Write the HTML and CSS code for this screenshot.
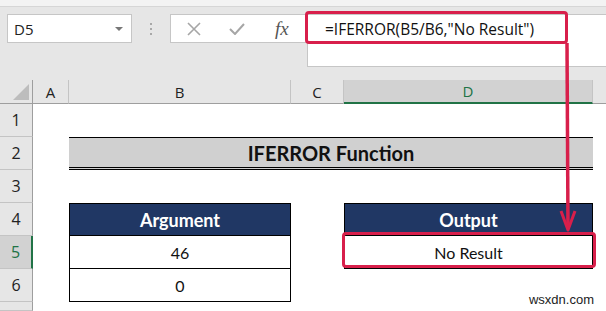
FILE: index.html
```html
<!DOCTYPE html>
<html lang="en">
<head>
    <meta charset="UTF-8">
    <meta name="viewport" content="width=device-width, initial-scale=1.0">
    <title>IFERROR Function</title>
    <link rel="stylesheet" href="styles.css">
</head>
<body>
    <div class="window">
        <div class="top-strip"></div>

        <div class="toolbar">
            <div class="name-box">
                <span>D5</span>
                <span class="drop"></span>
            </div>
            <div class="grip"><i></i><i></i><i></i></div>
            <div class="fx-box">
                <svg class="icon" width="14" height="14" viewBox="0 0 14 14">
                    <path d="M1 1 L13 13 M13 1 L1 13" stroke="#a6a6a6" stroke-width="1.6" fill="none"/>
                </svg>
                <svg class="icon" width="16" height="12" viewBox="0 0 16 12">
                    <path d="M1 6 L6 11 L15 1" stroke="#a6a6a6" stroke-width="2" fill="none"/>
                </svg>
                <span class="fx">fx</span>
            </div>
            <div class="formula">=IFERROR(B5/B6,"No Result")</div>
        </div>

        <div class="sheet">
            <div class="hd corner"><span class="tri"></span></div>
            <div class="hd">A</div>
            <div class="hd">B</div>
            <div class="hd">C</div>
            <div class="hd active-col">D</div>
            <div class="hd last"></div>

            <!-- row 1 -->
            <div class="rn">1</div>
            <div class="cell"></div><div class="cell"></div><div class="cell"></div><div class="cell"></div><div class="cell"></div>

            <!-- row 2 -->
            <div class="rn">2</div>
            <div class="cell"></div>
            <div class="cell title">IFERROR Function</div>
            <div class="cell"></div>

            <!-- row 3 -->
            <div class="rn">3</div>
            <div class="cell"></div><div class="cell"></div><div class="cell"></div><div class="cell"></div><div class="cell"></div>

            <!-- row 4 -->
            <div class="rn">4</div>
            <div class="cell"></div>
            <div class="cell head">Argument</div>
            <div class="cell"></div>
            <div class="cell head">Output</div>
            <div class="cell"></div>

            <!-- row 5 -->
            <div class="rn active-row">5</div>
            <div class="cell"></div>
            <div class="cell data">46</div>
            <div class="cell"></div>
            <div class="cell data">No Result</div>
            <div class="cell"></div>

            <!-- row 6 -->
            <div class="rn">6</div>
            <div class="cell"></div>
            <div class="cell data">0</div>
            <div class="cell"></div><div class="cell"></div><div class="cell"></div>

            <!-- row 7 -->
            <div class="rn"></div>
            <div class="cell"></div><div class="cell"></div><div class="cell"></div><div class="cell"></div><div class="cell"></div>
        </div>

        <!-- callout overlay -->
        <div class="mark mark-formula"></div>
        <div class="mark mark-cell"></div>
        <svg class="arrow" width="606" height="311" viewBox="0 0 606 311">
            <path d="M567 43 L568 229" stroke="#d81f4b" stroke-width="3.5" fill="none"/>
            <path d="M561 211 L568 230 L575 211" stroke="#d81f4b" stroke-width="3" fill="none" stroke-linejoin="round"/>
        </svg>

        <div class="watermark">wsxdn.com</div>
    </div>
</body>
</html>
```

FILE: styles.css
```css
body {
    margin: 0;
    font-family: 'Lato', 'Open Sans', sans-serif;
    background: #ffffff;
}

.window {
    position: relative;
    width: 606px;
    height: 311px;
    overflow: hidden;
    background: #e6e6e6;
}

.top-strip {
    height: 6px;
    background: #f3f3f3;
    border-bottom: 1px solid #d6d6d6;
}

/* formula bar */
.toolbar {
    display: flex;
    align-items: flex-start;
    height: 73px;
    padding: 7px 0 0 7px;
    box-sizing: border-box;
}

.name-box {
    display: flex;
    align-items: center;
    justify-content: space-between;
    width: 125px;
    height: 29px;
    box-sizing: border-box;
    padding: 0 8px 0 6px;
    background: white;
    border: 1px solid #c6c6c6;
    font-family: 'Open Sans', sans-serif;
    font-size: 15px;
    color: #222;
}

.drop {
    width: 0;
    height: 0;
    border-left: 4px solid transparent;
    border-right: 4px solid transparent;
    border-top: 4px solid #777;
}

.grip {
    display: flex;
    flex-direction: column;
    gap: 3px;
    width: 38px;
    align-items: center;
    padding-top: 9px;
}

.grip i {
    display: block;
    width: 2px;
    height: 2px;
    background: #a8a8a8;
}

.fx-box {
    display: flex;
    align-items: center;
    width: 137px;
    height: 29px;
    box-sizing: border-box;
    padding-left: 16px;
    gap: 28px;
    background: white;
    border: 1px solid #c6c6c6;
    border-right: none;
}

.fx-box .icon {
    flex: none;
}

.fx {
    margin-left: 2px;
    font-family: 'Liberation Serif', serif;
    font-style: italic;
    font-size: 19px;
    color: #555;
}

.formula {
    flex: 1;
    height: 53px;
    box-sizing: border-box;
    padding: 3px 0 0 17px;
    background: white;
    border: 1px solid #c6c6c6;
    border-right: none;
    font-family: 'Open Sans', sans-serif;
    font-size: 15.5px;
    color: #111;
}

/* worksheet */
.sheet {
    display: grid;
    grid-template-columns: 33px 36px 222px 53px 249px 1fr;
    grid-template-rows: 24px repeat(6, 33px) 1fr;
    height: 231px;
    background: white;
}

.hd {
    display: flex;
    align-items: center;
    justify-content: center;
    background: #e6e6e6;
    border-right: 1px solid #c4c4c4;
    border-bottom: 1px solid #9e9e9e;
    font-family: 'Open Sans', sans-serif;
    font-size: 15px;
    color: #222;
}

.hd.last {
    border-right: none;
}

.hd.corner {
    position: relative;
    border-right: 1px solid #9e9e9e;
}

.tri {
    position: absolute;
    right: 3px;
    bottom: 3px;
    width: 0;
    height: 0;
    border-left: 16px solid transparent;
    border-bottom: 16px solid #bdbdbd;
}

.hd.active-col {
    background: #d2d2d2;
    color: #217346;
    border-bottom: 2px solid #217346;
}

.rn {
    display: flex;
    align-items: center;
    justify-content: center;
    background: #e6e6e6;
    border-right: 1px solid #9e9e9e;
    border-bottom: 1px solid #c4c4c4;
    font-family: 'Open Sans', sans-serif;
    font-size: 16px;
    color: #222;
}

.rn.active-row {
    background: #d2d2d2;
    color: #217346;
    border-right: 2px solid #217346;
}

.cell {
    display: flex;
    align-items: center;
    justify-content: center;
    font-size: 16px;
    color: #111;
}

.title {
    grid-column: span 3;
    background: #d0d0d0;
    border-top: 1px solid #000;
    border-bottom: 3px double #000;
    font-weight: bold;
    font-size: 20px;
}

.head {
    background: #203764;
    color: white;
    font-weight: bold;
    font-size: 18px;
    border: 1px solid #000;
}

.data {
    border: 1px solid #000;
    border-top: none;
}

/* red callouts */
.mark {
    position: absolute;
    border: 3px solid #d81f4b;
    border-radius: 4px;
}

.mark-formula {
    left: 305px;
    top: 11px;
    width: 257px;
    height: 27px;
}

.mark-cell {
    left: 342px;
    top: 232px;
    width: 248px;
    height: 30px;
}

.arrow {
    position: absolute;
    left: 0;
    top: 0;
}

.watermark {
    position: absolute;
    right: 12px;
    bottom: 4px;
    font-family: 'Liberation Sans', sans-serif;
    font-size: 13px;
    color: #222;
}
```
